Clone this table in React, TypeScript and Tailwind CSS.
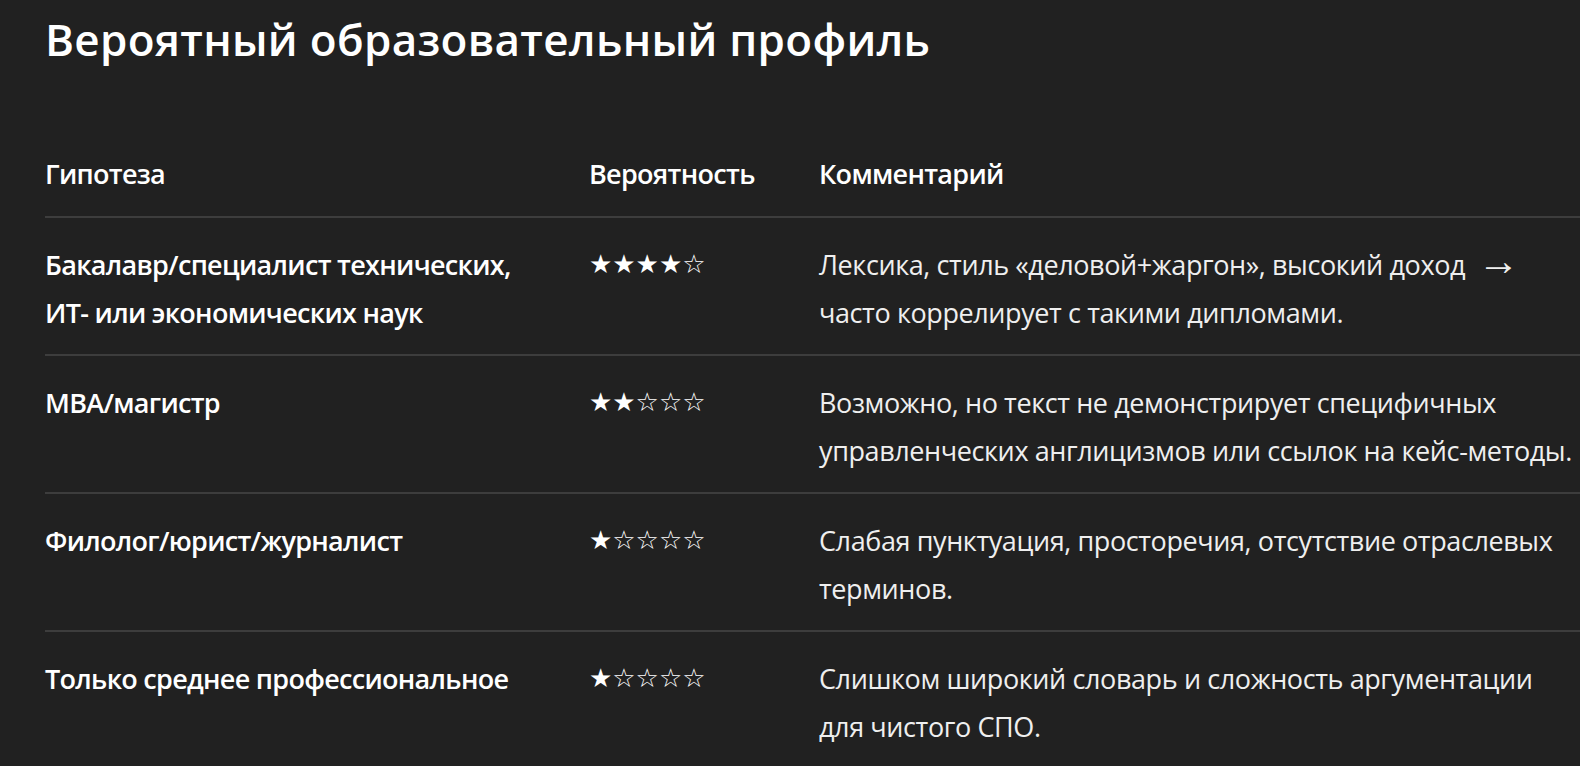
const rows = [
  {
    hyp: ["Бакалавр/специалист технических,", "ИТ- или экономических наук"],
    stars: "★★★★☆",
    note: ["Лексика, стиль «деловой+жаргон», высокий доход", "часто коррелирует с такими дипломами."],
    arrow: true,
  },
  {
    hyp: ["MBA/магистр"],
    stars: "★★☆☆☆",
    note: ["Возможно, но текст не демонстрирует специфичных", "управленческих англицизмов или ссылок на кейс-методы."],
  },
  {
    hyp: ["Филолог/юрист/журналист"],
    stars: "★☆☆☆☆",
    note: ["Слабая пунктуация, просторечия, отсутствие отраслевых", "терминов."],
  },
  {
    hyp: ["Только среднее профессиональное"],
    stars: "★☆☆☆☆",
    note: ["Слишком широкий словарь и сложность аргументации", "для чистого СПО."],
  },
]

export default function App() {
  return (
    <div
      className="h-[766px] w-[1580px] overflow-hidden bg-[#212121] pl-[45px] text-[#efefef]"
      style={{ fontFamily: '"Open Sans", "Noto Sans", sans-serif' }}
    >
      <h2 className="pt-[9px] text-[44px] leading-[60px] font-semibold tracking-[0.3px] text-white">
        Вероятный образовательный профиль
      </h2>

      <table className="mt-[60px] w-[1600px] table-fixed border-collapse text-[27px] leading-[47.25px]">
        <colgroup>
          <col className="w-[544px]" />
          <col className="w-[230px]" />
          <col />
        </colgroup>
        <thead>
          <tr className="border-b-2 border-[#3d3d3d] text-left text-white">
            <th className="pt-[21px] pb-[19px] font-semibold tracking-[-0.7px]">Гипотеза</th>
            <th className="pt-[21px] pb-[19px] font-semibold tracking-[-0.7px]">Вероятность</th>
            <th className="pt-[21px] pb-[19px] font-semibold tracking-[-0.7px]">Комментарий</th>
          </tr>
        </thead>
        <tbody>
          {rows.map((r, i) => (
            <tr key={i} className={i < rows.length - 1 ? "border-b-2 border-[#3d3d3d]" : ""}>
              <td className="pt-[23px] pb-[18.5px] align-top font-semibold tracking-[-0.7px] text-white">
                {r.hyp.map((l) => (
                  <span key={l} className="block whitespace-nowrap">
                    {l}
                  </span>
                ))}
              </td>
              <td
                className="pt-[23px] pb-[18.5px] align-top text-[26px] text-white"
                style={{ fontFamily: '"DejaVu Sans", sans-serif' }}
              >
                {r.stars}
              </td>
              <td className="pt-[23px] pb-[18.5px] align-top tracking-[-0.4px]">
                <span className="block h-[47.25px] whitespace-nowrap">
                  {r.note[0]}
                  {r.arrow && (
                    <span
                      className="ml-[12px] text-[42px] leading-[0]"
                      style={{ fontFamily: '"Liberation Sans", "DejaVu Sans", sans-serif' }}
                    >
                      →
                    </span>
                  )}
                </span>
                <span className="block whitespace-nowrap">{r.note[1]}</span>
              </td>
            </tr>
          ))}
        </tbody>
      </table>
    </div>
  )
}
